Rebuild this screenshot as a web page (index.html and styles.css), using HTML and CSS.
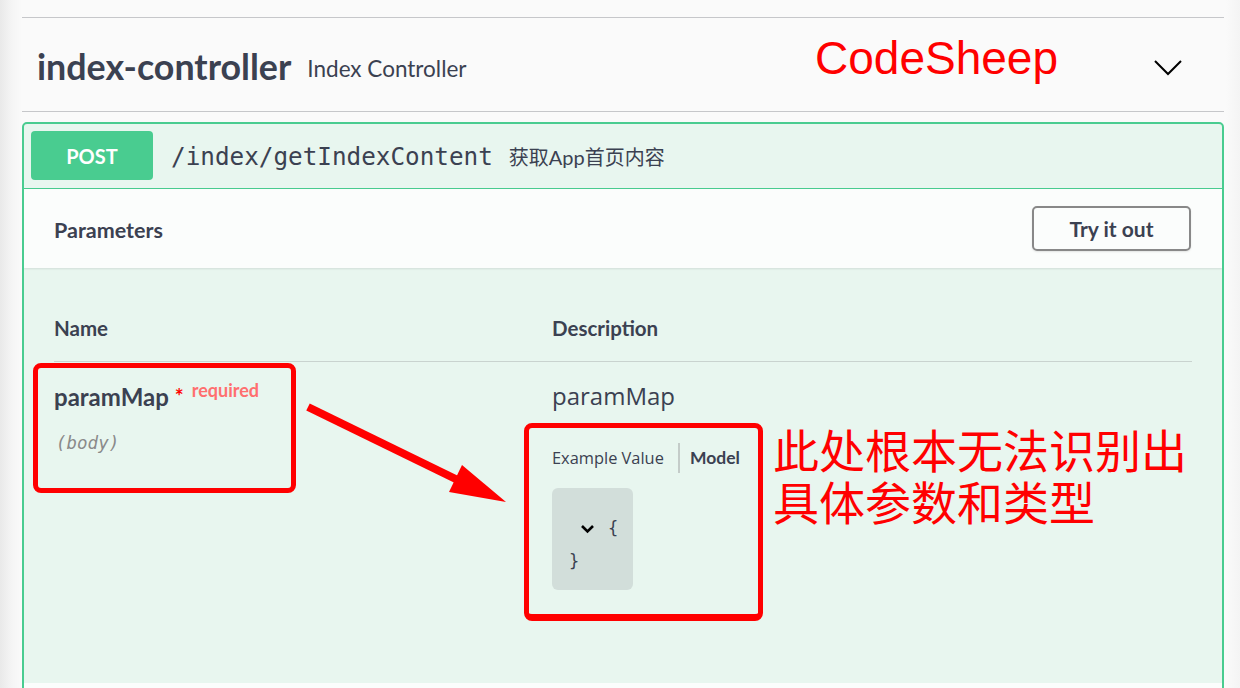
FILE: index.html
```html
<!DOCTYPE html>
<html lang="zh-CN">
<head>
<meta charset="utf-8">
<title>index-controller</title>
<link rel="stylesheet" href="styles.css">
</head>
<body>
<div class="page">
  <div class="prev-tag"></div>
  <div class="tag-header">
    <span class="tag-name">index-controller</span>
    <span class="tag-desc">Index Controller</span>
    <span class="tag-spacer"></span>
    <svg class="tag-arrow" width="28" height="18" viewBox="0 0 28 18"><polyline points="1,2 14,15 27,2" fill="none" stroke="#000" stroke-width="2"/></svg>
  </div>

  <div class="opblock">
    <div class="summary">
      <span class="method">POST</span>
      <span class="path">/index/getIndexContent</span>
      <span class="summary-desc">获取App首页内容</span>
    </div>
    <div class="section-header">
      <span class="section-title">Parameters</span>
      <button class="try-btn">Try it out</button>
    </div>
    <div class="table-container">
      <div class="params-head">
        <div class="col-name">Name</div>
        <div class="col-desc">Description</div>
      </div>
      <div class="params-row">
        <div class="col-name">
          <div class="param-name">paramMap<span class="star">*</span><span class="required">required</span></div>
          <div class="param-in">(body)</div>
        </div>
        <div class="col-desc">
          <div class="param-desc">paramMap</div>
          <div class="tabs">
            <span class="tab">Example Value</span>
            <span class="tab tab-active">Model</span>
          </div>
          <div class="model-box">
            <div class="code-line"><svg class="code-toggle" width="15" height="10" viewBox="0 0 15 10"><polyline points="2,2 7.5,7.5 13,2" fill="none" stroke="#000" stroke-width="2.6"/></svg><span>{</span></div>
            <div class="code-line close">}</div>
          </div>
        </div>
      </div>
    </div>
    <div class="next-section"></div>
  </div>
</div>

<div class="annotations">
  <div class="note-brand">CodeSheep</div>
  <div class="note-box note-box-name"></div>
  <div class="note-box note-box-model"></div>
  <div class="note-text">
    <div class="note-line">此处根本无法识别出</div>
    <div class="note-line">具体参数和类型</div>
  </div>
  <svg class="note-arrow" width="1240" height="688" viewBox="0 0 1240 688">
    <line x1="308" y1="407" x2="470" y2="486" stroke="#ff0000" stroke-width="8"/>
    <polygon points="462,465 449,492 506,502" fill="#ff0000"/>
  </svg>
</div>
</body>
</html>
```

FILE: styles.css
```css
html, body {
  margin: 0;
  padding: 0;
}
body {
  width: 1240px;
  height: 688px;
  overflow: hidden;
  position: relative;
  background: linear-gradient(to right, #e9e9e9 0px, #f5f5f5 12px, #fafafa 22px, #fafafa 1226px, #f4f4f4 1240px);
  color: #3b4151;
  font-family: "Open Sans", "Noto Sans CJK SC", sans-serif;
}
.page {
  margin: 0 16px 0 22px;
}
.prev-tag {
  height: 17px;
  border-bottom: 1px solid #c6c7ca;
}
.tag-header {
  height: 94px;
  border-bottom: 1px solid #c6c7ca;
  display: flex;
  align-items: center;
  padding: 4px 42px 0 15px;
  box-sizing: border-box;
}
.tag-name {
  font-family: "Lato", sans-serif;
  font-weight: 700;
  font-size: 35.8px;
  color: #3b4151;
}
.tag-desc {
  font-family: "Lato", sans-serif;
  font-size: 22.5px;
  margin-left: 16px;
  padding-top: 3px;
}
.tag-spacer {
  flex: 1;
}
.tag-arrow {
  margin-top: 2px;
}
.opblock {
  margin-top: 10px;
  border: 2px solid #49cc90;
  border-radius: 5px;
  background: #e8f6ef;
  overflow: hidden;
}
.summary {
  display: flex;
  align-items: center;
  padding: 7px 7px 8px 7px;
  border-bottom: 1px solid #49cc90;
}
.method {
  width: 122px;
  height: 49px;
  border-radius: 4px;
  background: #49cc90;
  color: #fff;
  font-family: "Lato", sans-serif;
  font-weight: 700;
  font-size: 20px;
  display: flex;
  align-items: center;
  justify-content: center;
}
.path {
  font-family: "DejaVu Sans Mono", monospace;
  font-size: 24.3px;
  margin-left: 18px;
  color: #3b4151;
  padding-top: 2px;
}
.summary-desc {
  font-family: "Lato", "Noto Sans CJK SC", sans-serif;
  font-size: 20px;
  margin-left: 16px;
  padding-top: 2px;
}
.section-header {
  display: flex;
  align-items: center;
  justify-content: space-between;
  padding: 17px 31px 17px 30px;
  background: rgba(255, 255, 255, 0.8);
  box-shadow: 0 1px 2px rgba(0, 0, 0, 0.1);
}
.section-title {
  font-family: "Lato", sans-serif;
  font-weight: 700;
  font-size: 21.5px;
  padding-top: 2px;
}
.try-btn {
  width: 159px;
  height: 45px;
  border: 2px solid #888;
  border-radius: 5px;
  background: transparent;
  font-family: "Lato", sans-serif;
  font-weight: 700;
  font-size: 21px;
  color: #3b4151;
  box-shadow: 0 1px 2px rgba(0, 0, 0, 0.1);
  padding: 0;
}
.table-container {
  padding: 36px 30px 93px 30px;
}
.params-head {
  display: flex;
  border-bottom: 1px solid #c9d3cf;
  font-family: "Lato", sans-serif;
  font-weight: 700;
  font-size: 20.5px;
  line-height: 26px;
  padding: 11px 0 20px;
}
.params-row {
  display: flex;
  padding-top: 19px;
}
.col-name {
  width: 498px;
}
.col-desc {
  flex: 1;
}
.param-name {
  font-family: "Lato", sans-serif;
  font-weight: 700;
  font-size: 24px;
  line-height: 32px;
}
.star {
  color: #ff0000;
  font-size: 21px;
  margin-left: 6px;
  position: relative;
  top: -2px;
}
.required {
  color: #ff6f6f;
  font-size: 18px;
  margin-left: 8px;
  position: relative;
  top: -9px;
}
.param-in {
  margin-top: 16px;
  font-family: "DejaVu Sans Mono", monospace;
  font-style: italic;
  font-size: 17.5px;
  line-height: 24px;
  color: #8a8a8a;
  padding-left: 2px;
}
.param-desc {
  font-size: 24px;
  line-height: 30px;
}
.tabs {
  margin-top: 32px;
  display: flex;
  align-items: center;
  font-size: 16.4px;
  line-height: 24px;
}
.tab {
  padding-right: 14px;
}
.tab-active {
  font-family: "Lato", sans-serif;
  font-weight: 700;
  font-size: 17.5px;
  border-left: 2px solid #c4ccc9;
  padding: 3px 0 3px 10px;
}
.model-box {
  margin-top: 15px;
  width: 81px;
  height: 102px;
  box-sizing: border-box;
  border-radius: 6px;
  background: #d2deda;
  padding: 24px 0 0 16px;
  font-family: "DejaVu Sans Mono", monospace;
  font-size: 17px;
  line-height: 33px;
}
.code-line {
  display: flex;
  align-items: center;
  height: 33px;
}
.code-toggle {
  margin-left: 12px;
  margin-right: 13px;
}
.code-line.close {
  padding-left: 1px;
}
.next-section {
  height: 12px;
  background: rgba(255, 255, 255, 0.8);
}
.annotations {
  position: absolute;
  left: 0;
  top: 0;
  width: 1240px;
  height: 688px;
  pointer-events: none;
}
.note-brand {
  position: absolute;
  left: 815px;
  top: 30px;
  font-family: "Liberation Sans", Arial, sans-serif;
  font-size: 46px;
  line-height: 56px;
  color: #ff0000;
}
.note-box {
  position: absolute;
  border: 5px solid #ff0000;
  border-radius: 8px;
  box-sizing: border-box;
}
.note-box-name {
  left: 33px;
  top: 363px;
  width: 263px;
  height: 130px;
}
.note-box-model {
  left: 524px;
  top: 423px;
  width: 239px;
  height: 198px;
  border-bottom-width: 7px;
}
.note-text {
  position: absolute;
  left: 773px;
  top: 420px;
  font-family: "Noto Sans CJK SC", sans-serif;
  font-size: 46px;
  color: #ff0000;
}
.note-line {
  height: 52px;
  line-height: 56px;
  overflow: visible;
}
```
